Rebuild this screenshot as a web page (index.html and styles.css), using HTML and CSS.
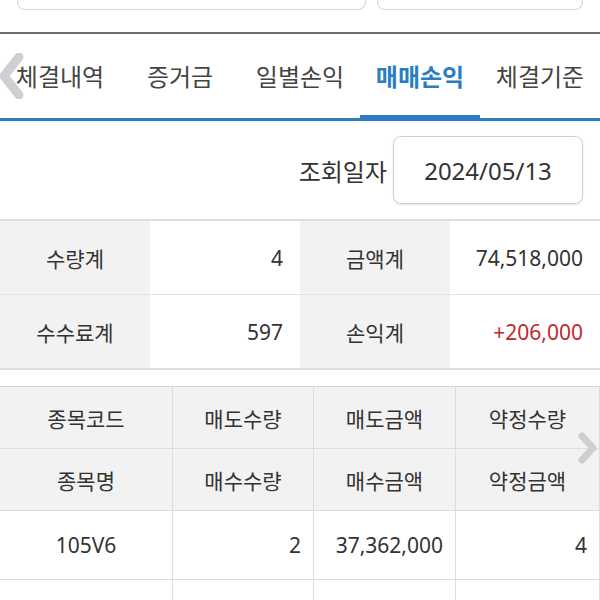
FILE: index.html
```html
<!DOCTYPE html>
<html lang="ko">
<head>
<meta charset="utf-8">
<link rel="stylesheet" href="styles.css">
</head>
<body>
<div class="page">
  <div class="topboxes">
    <div class="tbox tbox-left"></div>
    <div class="tbox tbox-right"></div>
  </div>
  <div class="divider"></div>
  <nav class="tabs">
    <svg class="chev chev-left" width="26" height="46" viewBox="0 0 26 46"><polyline points="21,4 6,23 21,42" fill="none" stroke="#cfcfd3" stroke-width="9" stroke-linecap="round" stroke-linejoin="round"/></svg>
    <div class="tab">체결내역</div>
    <div class="tab">증거금</div>
    <div class="tab">일별손익</div>
    <div class="tab active">매매손익</div>
    <div class="tab">체결기준</div>
  </nav>
  <div class="daterow">
    <span class="datelabel">조회일자</span>
    <div class="datebox">2024/05/13</div>
  </div>
  <table class="summary">
    <tr>
      <th>수량계</th><td>4</td><th>금액계</th><td>74,518,000</td>
    </tr>
    <tr>
      <th>수수료계</th><td>597</td><th>손익계</th><td class="red">+206,000</td>
    </tr>
  </table>
  <div class="gridwrap">
    <table class="grid">
      <tr class="hrow">
        <th class="c1">종목코드</th><th class="c2">매도수량</th><th class="c3">매도금액</th><th class="c4">약정수량</th><th class="c5"></th>
      </tr>
      <tr class="hrow">
        <th>종목명</th><th>매수수량</th><th>매수금액</th><th>약정금액</th><th></th>
      </tr>
      <tr class="drow">
        <td class="center">105V6</td><td>2</td><td>37,362,000</td><td>4</td><td></td>
      </tr>
      <tr class="erow">
        <td></td><td></td><td></td><td></td><td></td>
      </tr>
    </table>
    <svg class="chev chev-right" width="22" height="32" viewBox="0 0 22 32"><polyline points="5,4 16,16 5,28" fill="none" stroke="#cfcfd3" stroke-width="7" stroke-linecap="round" stroke-linejoin="round"/></svg>
  </div>
</div>
</body>
</html>
```

FILE: styles.css
```css
html, body {
  margin: 0;
  padding: 0;
  background: #ffffff;
}
body {
  width: 600px;
  height: 600px;
  overflow: hidden;
  font-family: "Noto Sans", "Noto Sans CJK KR", sans-serif;
  color: #333333;
}
.page {
  width: 600px;
}
.topboxes {
  display: flex;
  gap: 11px;
  padding: 0 17px;
  height: 10px;
}
.tbox {
  height: 9px;
  border: 1px solid #d4d4d4;
  border-top: none;
  border-radius: 0 0 8px 8px;
}
.tbox-left { width: 347px; }
.tbox-right { width: 204px; }
.divider {
  margin-top: 22px;
  height: 2px;
  background: #6e6e6e;
}
.tabs {
  position: relative;
  display: flex;
  height: 84px;
  border-bottom: 3px solid #2a7dc3;
}
.tab {
  position: relative;
  z-index: 1;
  flex: 0 0 120px;
  display: flex;
  align-items: center;
  justify-content: center;
  font-size: 24px;
  color: #444444;
  padding-bottom: 1px;
}
.tab.active {
  color: #2a7dc3;
  font-weight: 700;
}
.tab.active::after {
  content: "";
  position: absolute;
  left: 0;
  right: 0;
  bottom: -3px;
  height: 6px;
  background: #2a7dc3;
}
.chev-left {
  position: absolute;
  left: -2px;
  top: 19px;
  z-index: 0;
}
.daterow {
  display: flex;
  justify-content: flex-end;
  align-items: center;
  padding: 15px 17px 15px 0;
}
.datelabel {
  font-size: 24px;
  margin-right: 6px;
  color: #333333;
}
.datebox {
  width: 188px;
  height: 66px;
  border: 1px solid #cfcfcf;
  border-radius: 8px;
  box-shadow: 0 1px 2px rgba(0,0,0,0.12);
  display: flex;
  align-items: center;
  justify-content: center;
  font-size: 24px;
  color: #333333;
}
.summary {
  width: 600px;
  border-collapse: collapse;
  border-top: 2px solid #dedede;
  border-bottom: 2px solid #dedede;
  table-layout: fixed;
}
.summary th, .summary td {
  width: 150px;
  height: 73px;
  padding: 0;
  font-size: 21px;
  font-weight: 400;
  color: #333333;
}
.summary tr + tr th, .summary tr + tr td {
  border-top: 1px solid #e4e4e4;
}
.summary th {
  background: #f2f2f2;
  text-align: center;
}
.summary td {
  background: #ffffff;
  text-align: right;
  padding-right: 17px;
  box-sizing: border-box;
}
.summary td.red {
  color: #c1272d;
}
.gridwrap {
  position: relative;
  margin-top: 16px;
  width: 600px;
  overflow: hidden;
}
.grid {
  border-collapse: collapse;
  table-layout: fixed;
  width: 750px;
}
.grid th, .grid td {
  border: 1px solid #dddddd;
  padding: 0;
  font-size: 21px;
  font-weight: 400;
  color: #333333;
}
.grid tr:first-child th { border-top: 1px solid #d6d6d6; }
.grid th:first-child, .grid td:first-child { border-left: none; }
.grid .c1 { width: 172px; }
.grid .c2 { width: 140px; }
.grid .c3 { width: 141px; }
.grid .c4 { width: 143px; }
.grid .c5 { width: 154px; }
.grid .hrow th {
  height: 61px;
  background: #f2f2f2;
  text-align: center;
}
.grid .drow td {
  height: 68px;
  text-align: right;
  padding-right: 12px;
}
.grid .drow td.center {
  text-align: center;
  padding-right: 0;
}
.grid .erow td {
  height: 40px;
}
.chev-right {
  position: absolute;
  left: 577px;
  top: 46px;
}
```
